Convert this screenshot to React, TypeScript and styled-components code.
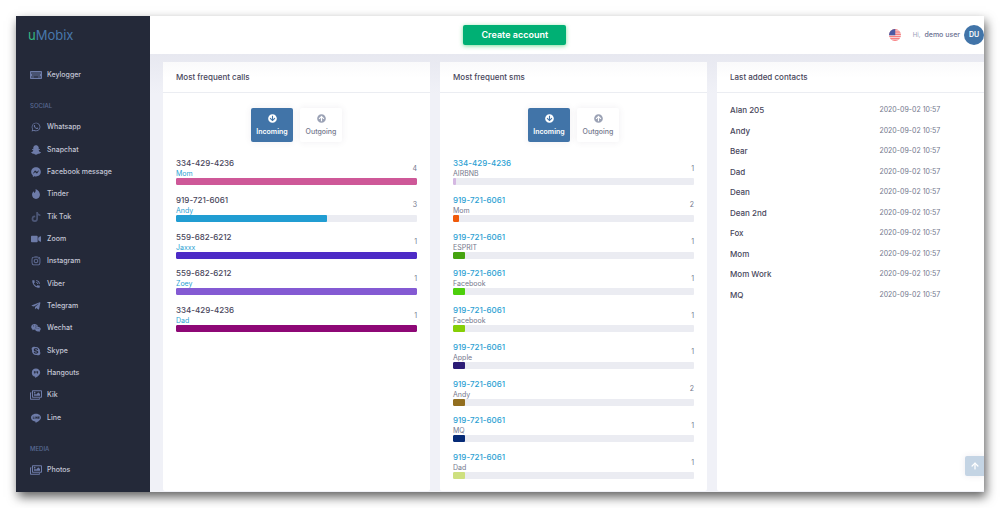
import React from "react";
import styled, { createGlobalStyle } from "styled-components";
import {
  FaArrowCircleDown,
  FaArrowCircleUp,
  FaFacebookMessenger,
  FaInstagram,
  FaKeyboard,
  FaRegImages,
  FaSkype,
  FaSnapchatGhost,
  FaTelegramPlane,
  FaTiktok,
  FaVideo,
  FaWeixin,
  FaWhatsapp,
} from "react-icons/fa";
import { MdPhoneInTalk } from "react-icons/md";
import { FiArrowUp } from "react-icons/fi";

const color = {
  navy: "#242939",
  navIcon: "#6d7ba8",
  navText: "#c3c6d6",
  navHeading: "#596a94",
  text: "#48465b",
  muted: "#74788d",
  link: "#2b9fd3",
  primary: "#4174a8",
  green: "#00b074",
  track: "#ebecf2",
};

const GlobalStyle = createGlobalStyle`
  *, *::before, *::after { box-sizing: border-box; }
  body {
    margin: 0;
    background: #fff;
    color: ${color.text};
    font-family: Inter, "Open Sans", sans-serif;
    font-size: 8px;
    line-height: 10px;
  }
  ul, h2, h3, p { margin: 0; padding: 0; list-style: none; font-size: inherit; font-weight: inherit; }
  a { color: inherit; text-decoration: none; }
  button { margin: 0; padding: 0; border: 0; font: inherit; cursor: pointer; }
  svg { display: block; flex: none; }
`;

const Page = styled.div`
  display: flex;
  min-height: 100vh;
  padding: 16px;
`;

const Frame = styled.div`
  position: relative;
  display: flex;
  flex: 1;
  min-width: 0;
  background: #f0f1f7;
  box-shadow: 2px 5px 10px rgba(0, 0, 0, 0.62);
`;

const Sidebar = styled.aside`
  display: flex;
  flex-direction: column;
  flex: 0 0 134px;
  padding: 10px 12px 11px;
  background: ${color.navy};
`;

const Logo = styled.a`
  margin-bottom: 20px;
  color: #4878ab;
  font-size: 13px;
  font-weight: 400;
  line-height: 18px;
`;

const LogoAccent = styled.span`
  color: #35b884;
`;

const Nav = styled.nav`
  display: flex;
  flex: 1;
  flex-direction: column;
`;

const NavList = styled.ul<{ $fill?: boolean }>`
  display: grid;
  grid-auto-rows: minmax(22px, 1fr);
  flex: ${(p) => (p.$fill ? "1" : "none")};
`;

const NavHeading = styled.h3`
  padding: 15px 2px 5px;
  color: ${color.navHeading};
  font-size: 6px;
  font-weight: 500;
  line-height: 10px;
`;

const NavLink = styled.a`
  display: flex;
  align-items: center;
  gap: 5px;
  height: 100%;
  padding-left: 2px;
  color: ${color.navText};
  font-size: 7px;
  font-weight: 500;
`;

const NavIcon = styled.span<{ $wide?: boolean }>`
  display: flex;
  width: 12px;
  justify-content: center;
  color: ${color.navIcon};
  font-size: ${(p) => (p.$wide ? 12 : 10)}px;
`;

const Main = styled.div`
  display: flex;
  flex: 1;
  flex-direction: column;
  min-width: 0;
`;

const TopBar = styled.header`
  display: grid;
  grid-template-columns: 3fr auto 4fr;
  align-items: center;
  height: 38px;
  background: #fff;
`;

const CreateButton = styled.button`
  grid-column: 2;
  width: 103px;
  height: 20px;
  border-radius: 2px;
  background: ${color.green};
  box-shadow: 0 1px 4px rgba(40, 200, 90, 0.6);
  color: #fff;
  font-size: 9px;
  font-weight: 600;
`;

const TopTools = styled.div`
  display: flex;
  align-items: center;
  justify-content: flex-end;
`;

const FlagButton = styled.button`
  margin-right: 12px;
  background: none;
`;

const UserButton = styled.button`
  display: flex;
  align-items: center;
  gap: 4px;
  background: none;
  color: #6c7293;
  font-size: 7px;
  font-weight: 500;
`;

const Greeting = styled.span`
  color: #959cb6;
  font-size: 6px;
  font-weight: 400;
`;

const Avatar = styled.span`
  width: 20px;
  height: 20px;
  border-radius: 50%;
  background: ${color.primary};
  color: #fff;
  font-weight: 600;
  line-height: 20px;
  text-align: center;
`;

const Content = styled.main`
  display: grid;
  grid-template-columns: repeat(3, minmax(0, 1fr));
  flex: 1;
  gap: 10px;
  padding: 8px 0 1px 13px;
  background: linear-gradient(#e7e8f0, #f0f1f7 40px);
`;

const Card = styled.section`
  display: flex;
  flex-direction: column;
  border-radius: 2px;
  background: #fff;
`;

const CardTitle = styled.h2`
  padding: 0 13px;
  border-bottom: 1px solid #ebedf2;
  background: linear-gradient(#fafafb, #fff 16px);
  font-size: 8px;
  font-weight: 500;
  line-height: 30px;
`;

const CardBody = styled.div`
  display: flex;
  flex: 1;
  flex-direction: column;
  padding: 15px 13px 3px;
`;

const Toggle = styled.div`
  display: flex;
  justify-content: center;
  gap: 7px;
  margin-bottom: 15px;
`;

const ToggleButton = styled.button<{ $active?: boolean }>`
  display: flex;
  flex-direction: column;
  align-items: center;
  gap: 4px;
  width: 42px;
  height: 34px;
  padding-top: 6px;
  border-radius: 2px;
  background: ${(p) => (p.$active ? color.primary : "#fff")};
  box-shadow: 0 0 7px rgba(82, 63, 105, 0.09);
  color: ${(p) => (p.$active ? "#fff" : color.muted)};
  font-size: 7px;
  font-weight: ${(p) => (p.$active ? 600 : 500)};

  svg {
    color: ${(p) => (p.$active ? "#fff" : "#9ba2b5")};
    font-size: 9px;
  }
`;

const StatList = styled.ul`
  display: grid;
  flex: 1;
  grid-template-rows: repeat(9, minmax(36px, 1fr));
`;

const StatRow = styled.li`
  display: grid;
  grid-template-columns: 1fr auto;
  align-content: start;
  align-items: center;
`;

const StatNumber = styled.p<{ $link?: boolean }>`
  color: ${(p) => (p.$link ? color.link : color.text)};
  font-size: 8px;
  font-weight: 500;
  line-height: 12px;
`;

const StatName = styled.p<{ $link?: boolean }>`
  color: ${(p) => (p.$link ? color.link : color.muted)};
  font-size: 7px;
  line-height: 9px;
`;

const StatCount = styled.span`
  padding-top: 2px;
  color: ${color.muted};
  font-size: 7px;
`;

const Bar = styled.div`
  grid-column: 1 / -1;
  height: 7px;
  border-radius: 1px;
  background: ${color.track};
  overflow: hidden;
`;

const BarFill = styled.div<{ $color: string }>`
  height: 100%;
  border-radius: 1px;
  background: ${(p) => p.$color};
`;

const ContactTable = styled.table`
  width: 100%;
  height: 205px;
  margin-top: -8px;
  border-collapse: collapse;
`;

const ContactName = styled.th`
  width: 62%;
  padding: 0;
  font-size: 8px;
  font-weight: 500;
  text-align: left;
`;

const ContactDate = styled.td`
  padding: 0;
  color: ${color.muted};
  font-size: 7px;
`;

const ScrollTop = styled.button`
  position: absolute;
  right: 0;
  bottom: 16px;
  display: flex;
  align-items: center;
  justify-content: center;
  width: 19px;
  height: 20px;
  border-radius: 2px 0 0 2px;
  background: #c4d4e4;
  box-shadow: 0 0 6px rgba(82, 63, 105, 0.1);
  color: #fff;
  font-size: 10px;
`;

const TinderIcon = () => (
  <svg width="1em" height="1em" viewBox="0 0 24 24" fill="currentColor">
    <path d="M11 0c6 2.500 10.500 7.500 10.500 14 0 5.500-4.200 10-9.500 10s-9.500-4.500-9.500-10c0-3.500 1.700-6.500 4-8.500.3 2.200.8 3.500 2 4.300C11 7.500 11.700 4 11 0z" />
  </svg>
);

const HangoutsIcon = () => (
  <svg width="1em" height="1em" viewBox="0 0 24 24" fill="currentColor">
    <path
      fillRule="evenodd"
      d="M12 1a10 10 0 0 0-2 19.800V24c5-2.400 12-7 12-13A10 10 0 0 0 12 1zM7 7.500h4v4L9.500 14H8l1-2.500H7zM13 7.500h4v4L15.500 14H14l1-2.500h-2z"
    />
  </svg>
);

const LineIcon = () => (
  <svg width="1em" height="1em" viewBox="0 0 24 24" fill="currentColor">
    <path
      fillRule="evenodd"
      d="M12 2C5.400 2 0 6 0 11.200c0 4.600 4.300 8.200 10 8.900 1.200.2 1 1.200.8 3.400C16 21 24 16.500 24 11.200 24 6 18.600 2 12 2zM4.500 8.500H6v4h2V14H4.500zM9 8.500h1.500V14H9zM11.500 8.500H13l1.500 2.500V8.500H16V14h-1.500L13 11.500V14h-1.500zM17 8.500h3.500V10h-2v.600h2V12h-2v.500h2V14H17z"
    />
  </svg>
);

const FlagIcon = () => (
  <svg width="12" height="12" viewBox="0 0 24 24">
    <defs>
      <clipPath id="flag-round">
        <circle cx="12" cy="12" r="12" />
      </clipPath>
    </defs>
    <g clipPath="url(#flag-round)">
      <rect width="24" height="24" fill="#f6eef0" />
      <path
        d="M0 1.500h24M0 6h24M0 10.500h24M0 15h24M0 19.500h24M0 23.500h24"
        stroke="#fa7f80"
        strokeWidth="2.600"
      />
      <rect width="12.500" height="12.500" fill="#4d5aa3" />
    </g>
  </svg>
);

type NavItem = { label: string; icon: React.ReactNode; wide?: boolean };

const tools: NavItem[] = [{ label: "Keylogger", icon: <FaKeyboard />, wide: true }];

const social: NavItem[] = [
  { label: "Whatsapp", icon: <FaWhatsapp /> },
  { label: "Snapchat", icon: <FaSnapchatGhost /> },
  { label: "Facebook message", icon: <FaFacebookMessenger /> },
  { label: "Tinder", icon: <TinderIcon /> },
  { label: "Tik Tok", icon: <FaTiktok opacity={0.55} /> },
  { label: "Zoom", icon: <FaVideo /> },
  { label: "Instagram", icon: <FaInstagram /> },
  { label: "Viber", icon: <MdPhoneInTalk /> },
  { label: "Telegram", icon: <FaTelegramPlane /> },
  { label: "Wechat", icon: <FaWeixin /> },
  { label: "Skype", icon: <FaSkype /> },
  { label: "Hangouts", icon: <HangoutsIcon /> },
  { label: "Kik", icon: <FaRegImages />, wide: true },
  { label: "Line", icon: <LineIcon /> },
];

const media: NavItem[] = [{ label: "Photos", icon: <FaRegImages />, wide: true }];

type Stat = { number: string; name: string; count: number; percent: number; color: string };

const calls: Stat[] = [
  { number: "334-429-4236", name: "Mom", count: 4, percent: 100, color: "#ce5898" },
  { number: "919-721-6061", name: "Andy", count: 3, percent: 62.5, color: "#219dd2" },
  { number: "559-682-6212", name: "Jaxxx", count: 1, percent: 100, color: "#4d2bc6" },
  { number: "559-682-6212", name: "Zoey", count: 1, percent: 100, color: "#845ad3" },
  { number: "334-429-4236", name: "Dad", count: 1, percent: 100, color: "#8e0876" },
];

const sms: Stat[] = [
  { number: "334-429-4236", name: "AIRBNB", count: 1, percent: 1.25, color: "#d5b8e2" },
  { number: "919-721-6061", name: "Mom", count: 2, percent: 2.5, color: "#f05a0a" },
  { number: "919-721-6061", name: "ESPRIT", count: 1, percent: 5, color: "#45a30f" },
  { number: "919-721-6061", name: "Facebook", count: 1, percent: 5, color: "#4dcf0c" },
  { number: "919-721-6061", name: "Facebook", count: 1, percent: 5, color: "#86cf06" },
  { number: "919-721-6061", name: "Apple", count: 1, percent: 5, color: "#2c1c76" },
  { number: "919-721-6061", name: "Andy", count: 2, percent: 5, color: "#926e1f" },
  { number: "919-721-6061", name: "MQ", count: 1, percent: 5, color: "#062b77" },
  { number: "919-721-6061", name: "Dad", count: 1, percent: 5, color: "#cee07f" },
];

const contacts = [
  "Alan 205",
  "Andy",
  "Bear",
  "Dad",
  "Dean",
  "Dean 2nd",
  "Fox",
  "Mom",
  "Mom Work",
  "MQ",
];

const NavGroup = ({ items, fill }: { items: NavItem[]; fill?: boolean }) => (
  <NavList $fill={fill}>
    {items.map((item) => (
      <li key={item.label}>
        <NavLink href="#">
          <NavIcon $wide={item.wide}>{item.icon}</NavIcon>
          {item.label}
        </NavLink>
      </li>
    ))}
  </NavList>
);

const StatCard = ({
  title,
  stats,
  linkNumber,
}: {
  title: string;
  stats: Stat[];
  linkNumber?: boolean;
}) => (
  <Card>
    <CardTitle>{title}</CardTitle>
    <CardBody>
      <Toggle>
        <ToggleButton type="button" $active>
          <FaArrowCircleDown />
          Incoming
        </ToggleButton>
        <ToggleButton type="button">
          <FaArrowCircleUp />
          Outgoing
        </ToggleButton>
      </Toggle>
      <StatList>
        {stats.map((s, i) => (
          <StatRow key={i}>
            <div>
              <StatNumber $link={linkNumber}>
                {linkNumber ? <a href="#">{s.number}</a> : s.number}
              </StatNumber>
              <StatName $link={!linkNumber}>
                {linkNumber ? s.name : <a href="#">{s.name}</a>}
              </StatName>
            </div>
            <StatCount>{s.count}</StatCount>
            <Bar>
              <BarFill $color={s.color} style={{ width: `${s.percent}%` }} />
            </Bar>
          </StatRow>
        ))}
      </StatList>
    </CardBody>
  </Card>
);

export default function App() {
  return (
    <>
      <GlobalStyle />
      <Page>
        <Frame>
          <Sidebar>
            <Logo href="#">
              <LogoAccent>u</LogoAccent>Mobix
            </Logo>
            <Nav>
              <NavGroup items={tools} />
              <NavHeading>SOCIAL</NavHeading>
              <NavGroup items={social} fill />
              <NavHeading>MEDIA</NavHeading>
              <NavGroup items={media} />
            </Nav>
          </Sidebar>
          <Main>
            <TopBar>
              <CreateButton type="button">Create account</CreateButton>
              <TopTools>
                <FlagButton type="button" aria-label="Language">
                  <FlagIcon />
                </FlagButton>
                <UserButton type="button">
                  <Greeting>Hi,</Greeting>
                  demo user
                  <Avatar>DU</Avatar>
                </UserButton>
              </TopTools>
            </TopBar>
            <Content>
              <StatCard title="Most frequent calls" stats={calls} />
              <StatCard title="Most frequent sms" stats={sms} linkNumber />
              <Card>
                <CardTitle>Last added contacts</CardTitle>
                <CardBody>
                  <ContactTable>
                    <tbody>
                      {contacts.map((name) => (
                        <tr key={name}>
                          <ContactName scope="row">{name}</ContactName>
                          <ContactDate>2020-09-02 10:57</ContactDate>
                        </tr>
                      ))}
                    </tbody>
                  </ContactTable>
                </CardBody>
              </Card>
            </Content>
          </Main>
          <ScrollTop type="button" aria-label="Scroll to top">
            <FiArrowUp strokeWidth={3} />
          </ScrollTop>
        </Frame>
      </Page>
    </>
  );
}
